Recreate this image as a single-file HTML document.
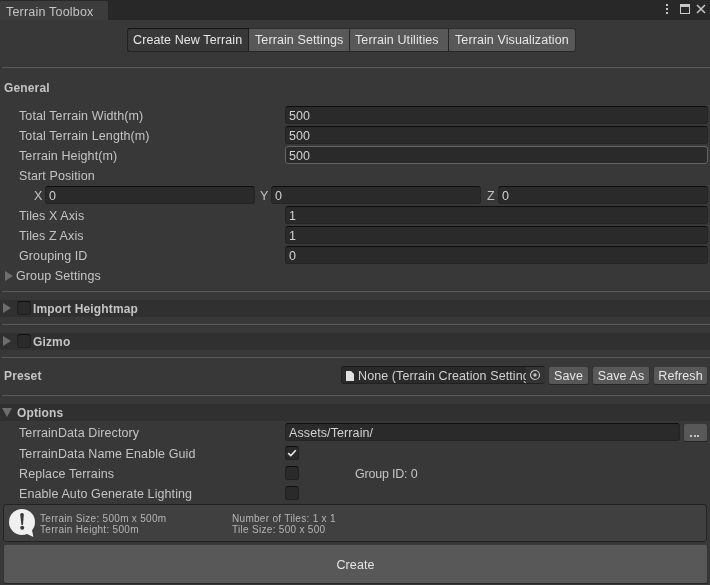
<!DOCTYPE html>
<html><head><meta charset="utf-8">
<style>
*{box-sizing:border-box;margin:0;padding:0}
.t,.fld span,.btn,.a{will-change:transform}
html,body{width:710px;height:585px;overflow:hidden;background:#383838}
body{position:relative;font-family:"Liberation Sans",sans-serif;font-size:12.5px;color:#c4c4c4;letter-spacing:0.1px}
.a{position:absolute;white-space:nowrap}
.t{position:absolute;white-space:nowrap;line-height:14px;margin-top:1px}
.b{font-weight:bold;letter-spacing:0.15px;font-size:12px}
.sep{position:absolute;left:2px;right:0;height:1px;background:#595959}
.fld{position:absolute;height:18px;background:#2a2a2a;border:1px solid #242424;border-top-color:#0e0e0e;border-radius:3px}
.fld span{position:absolute;left:3px;top:2px;line-height:14px;color:#d2d2d2;white-space:nowrap}
.btn{position:absolute;background:#585858;border:1px solid #4a4a4a;border-bottom-color:#2a2a2a;border-radius:3px;color:#e6e6e6;text-align:center;line-height:15px;padding-top:1px}
.band{position:absolute;left:0;right:0;height:17px;background:#303030}
.tri{position:absolute;width:0;height:0;border-top:5px solid transparent;border-bottom:5px solid transparent;border-left:8px solid #6d6d6d}
.trid{position:absolute;width:0;height:0;border-left:5px solid transparent;border-right:5px solid transparent;border-top:9px solid #6d6d6d}
.pb{border-color:#333;border-top-color:#3a3a3a;border-bottom-color:#262626;line-height:16px}
.cb{position:absolute;width:14px;height:14px;background:#2a2a2a;border:1px solid #212121;border-top-color:#0e0e0e;border-radius:3px}
</style></head><body>
<!-- title bar -->
<div class="a" style="left:0;top:0;width:710px;height:20px;background:#282828"></div>
<div class="a" style="left:0;top:1px;width:109px;height:19px;background:#3c3c3c;border-right:1px solid #262626;border-radius:0 2px 0 0"></div>
<div class="t" style="left:6px;top:4px;color:#c4c4c4;letter-spacing:0.2px">Terrain Toolbox</div>
<!-- title icons -->
<div class="a" style="left:666px;top:4px;width:2px;height:2px;background:#c4c4c4"></div>
<div class="a" style="left:666px;top:8px;width:2px;height:2px;background:#c4c4c4"></div>
<div class="a" style="left:666px;top:12px;width:2px;height:2px;background:#c4c4c4"></div>
<div class="a" style="left:680px;top:4px;width:10px;height:10px;border:1px solid #c8c8c8;border-top-width:3px"></div>
<svg class="a" style="left:696px;top:4px" width="10" height="10" viewBox="0 0 10 10"><path d="M1 1L9 9M9 1L1 9" stroke="#c8c8c8" stroke-width="1.5"/></svg>

<!-- toolbar -->
<div class="a" style="left:127px;top:28px;width:449px;height:24px;background:#585858;border:1px solid #2c2c2c;border-bottom-color:#262626;border-radius:3px"></div>
<div class="a" style="left:127px;top:28px;width:122px;height:24px;background:#383838;border:1px solid #232323;border-top-color:#121212;border-right:none;border-radius:3px 0 0 3px"></div>
<div class="a" style="left:248px;top:29px;width:1px;height:22px;background:#1e1e1e"></div>
<div class="a" style="left:349px;top:29px;width:1px;height:22px;background:#262626"></div>
<div class="a" style="left:448px;top:29px;width:1px;height:22px;background:#262626"></div>
<div class="t" style="left:133px;top:32px;color:#e6e6e6">Create New Terrain</div>
<div class="t" style="left:255px;top:32px;color:#e6e6e6">Terrain Settings</div>
<div class="t" style="left:355px;top:32px;color:#e6e6e6">Terrain Utilities</div>
<div class="t" style="left:455px;top:32px;color:#e6e6e6">Terrain Visualization</div>

<div class="sep" style="top:67px"></div>
<div class="t b" style="left:4px;top:81px;margin-top:0">General</div>

<div class="t" style="left:19px;top:108px">Total Terrain Width(m)</div>
<div class="fld" style="left:285px;top:106px;width:423px"><span>500</span></div>
<div class="t" style="left:19px;top:128px">Total Terrain Length(m)</div>
<div class="fld" style="left:285px;top:126px;width:423px"><span>500</span></div>
<div class="t" style="left:19px;top:148px">Terrain Height(m)</div>
<div class="fld" style="left:285px;top:146px;width:423px;border-color:#656565"><span>500</span></div>
<div class="t" style="left:19px;top:168px">Start Position</div>
<div class="t" style="left:34px;top:188px">X</div>
<div class="fld" style="left:45px;top:186px;width:210px"><span>0</span></div>
<div class="t" style="left:260px;top:188px">Y</div>
<div class="fld" style="left:271px;top:186px;width:210px"><span>0</span></div>
<div class="t" style="left:487px;top:188px">Z</div>
<div class="fld" style="left:498px;top:186px;width:210px"><span>0</span></div>
<div class="t" style="left:19px;top:208px">Tiles X Axis</div>
<div class="fld" style="left:285px;top:206px;width:423px"><span>1</span></div>
<div class="t" style="left:19px;top:228px">Tiles Z Axis</div>
<div class="fld" style="left:285px;top:226px;width:423px"><span>1</span></div>
<div class="t" style="left:19px;top:248px">Grouping ID</div>
<div class="fld" style="left:285px;top:246px;width:423px"><span>0</span></div>
<div class="tri" style="left:5px;top:271px"></div>
<div class="t" style="left:16px;top:268px">Group Settings</div>

<div class="sep" style="top:291px"></div>
<div class="band" style="top:300px"></div>
<div class="tri" style="left:3px;top:303px"></div>
<div class="cb" style="left:17px;top:301px"></div>
<div class="t b" style="left:33px;top:301px">Import Heightmap</div>

<div class="sep" style="top:324px"></div>
<div class="band" style="top:333px"></div>
<div class="tri" style="left:3px;top:336px"></div>
<div class="cb" style="left:17px;top:334px"></div>
<div class="t b" style="left:33px;top:334px">Gizmo</div>

<div class="sep" style="top:357px"></div>
<div class="t b" style="left:4px;top:368px">Preset</div>
<div class="fld" style="left:341px;top:366px;width:204px;border-color:#202020;border-top-color:#181818"><span style="left:16px;width:168px;overflow:hidden">None (Terrain Creation Settings)</span><div class="a" style="left:184px;top:0;width:19px;height:16px;background:#343434;border-radius:0 2px 2px 0"></div></div>
<svg class="a" style="left:345px;top:370px" width="10" height="12" viewBox="0 0 10 12"><path d="M1 1H6L9 4V11H1Z" fill="#e0e0e0"/></svg>
<svg class="a" style="left:529px;top:369px" width="12" height="12" viewBox="0 0 12 12"><circle cx="6" cy="6" r="4.5" fill="none" stroke="#c4c4c4" stroke-width="1.2"/><circle cx="6" cy="6" r="1.7" fill="#c4c4c4"/></svg>
<div class="btn pb" style="left:548px;top:366px;width:41px;height:19px">Save</div>
<div class="btn pb" style="left:592px;top:366px;width:58px;height:19px">Save As</div>
<div class="btn pb" style="left:653px;top:366px;width:55px;height:19px">Refresh</div>

<div class="sep" style="top:395px"></div>
<div class="band" style="top:404px"></div>
<div class="trid" style="left:2px;top:408px"></div>
<div class="t b" style="left:17px;top:405px">Options</div>

<div class="t" style="left:19px;top:425px">TerrainData Directory</div>
<div class="fld" style="left:285px;top:423px;width:395px"><span>Assets/Terrain/</span></div>
<div class="btn pb" style="left:683px;top:423px;width:25px;height:19px"></div><div class="a" style="left:690px;top:435.2px;width:1.7px;height:1.7px;background:#e8e8e8;border-radius:1px"></div><div class="a" style="left:693.5px;top:435.2px;width:1.7px;height:1.7px;background:#e8e8e8;border-radius:1px"></div><div class="a" style="left:697px;top:435.2px;width:1.7px;height:1.7px;background:#e8e8e8;border-radius:1px"></div>
<div class="t" style="left:19px;top:446px">TerrainData Name Enable Guid</div>
<div class="cb" style="left:285px;top:446px"></div>
<svg class="a" style="left:285px;top:446px" width="14" height="14" viewBox="0 0 14 14"><path d="M3.2 7.2L5.8 9.6L10.8 4.2" fill="none" stroke="#e8e8e8" stroke-width="1.6"/></svg>
<div class="t" style="left:19px;top:466px">Replace Terrains</div>
<div class="cb" style="left:285px;top:466px"></div>
<div class="t" style="left:355px;top:466px;letter-spacing:-0.2px">Group ID: 0</div>
<div class="t" style="left:19px;top:486px">Enable Auto Generate Lighting</div>
<div class="cb" style="left:285px;top:486px"></div>

<div class="a" style="left:3px;top:504px;width:704px;height:38px;background:#404040;border:1px solid #232323;border-radius:3px"></div>
<svg class="a" style="left:8px;top:508px" width="28" height="30" viewBox="0 0 28 30"><circle cx="14" cy="14" r="13" fill="#f0f0f0"/><path d="M18 25.5L25.4 29L23.6 20Z" fill="#f0f0f0"/><path d="M12.2 6.6Q12.2 5 14 5Q15.8 5 15.8 6.6L15 16.4Q14.9 17 14.2 17Q13.5 17 13.4 16.4Z" fill="#383838"/><circle cx="14.2" cy="19.7" r="2" fill="#383838"/></svg>
<div class="a" style="left:40px;top:513px;font-size:10px;line-height:11px;letter-spacing:0.3px;color:#b4b4b4">Terrain Size: 500m x 500m<br>Terrain Height: 500m</div>
<div class="a" style="left:232px;top:513px;font-size:10px;line-height:11px;letter-spacing:0.3px;color:#b4b4b4">Number of Tiles: 1 x 1<br>Tile Size: 500 x 500</div>

<div class="btn pb" style="left:3px;top:544px;width:705px;height:40px;line-height:39px">Create</div>
</body></html>
